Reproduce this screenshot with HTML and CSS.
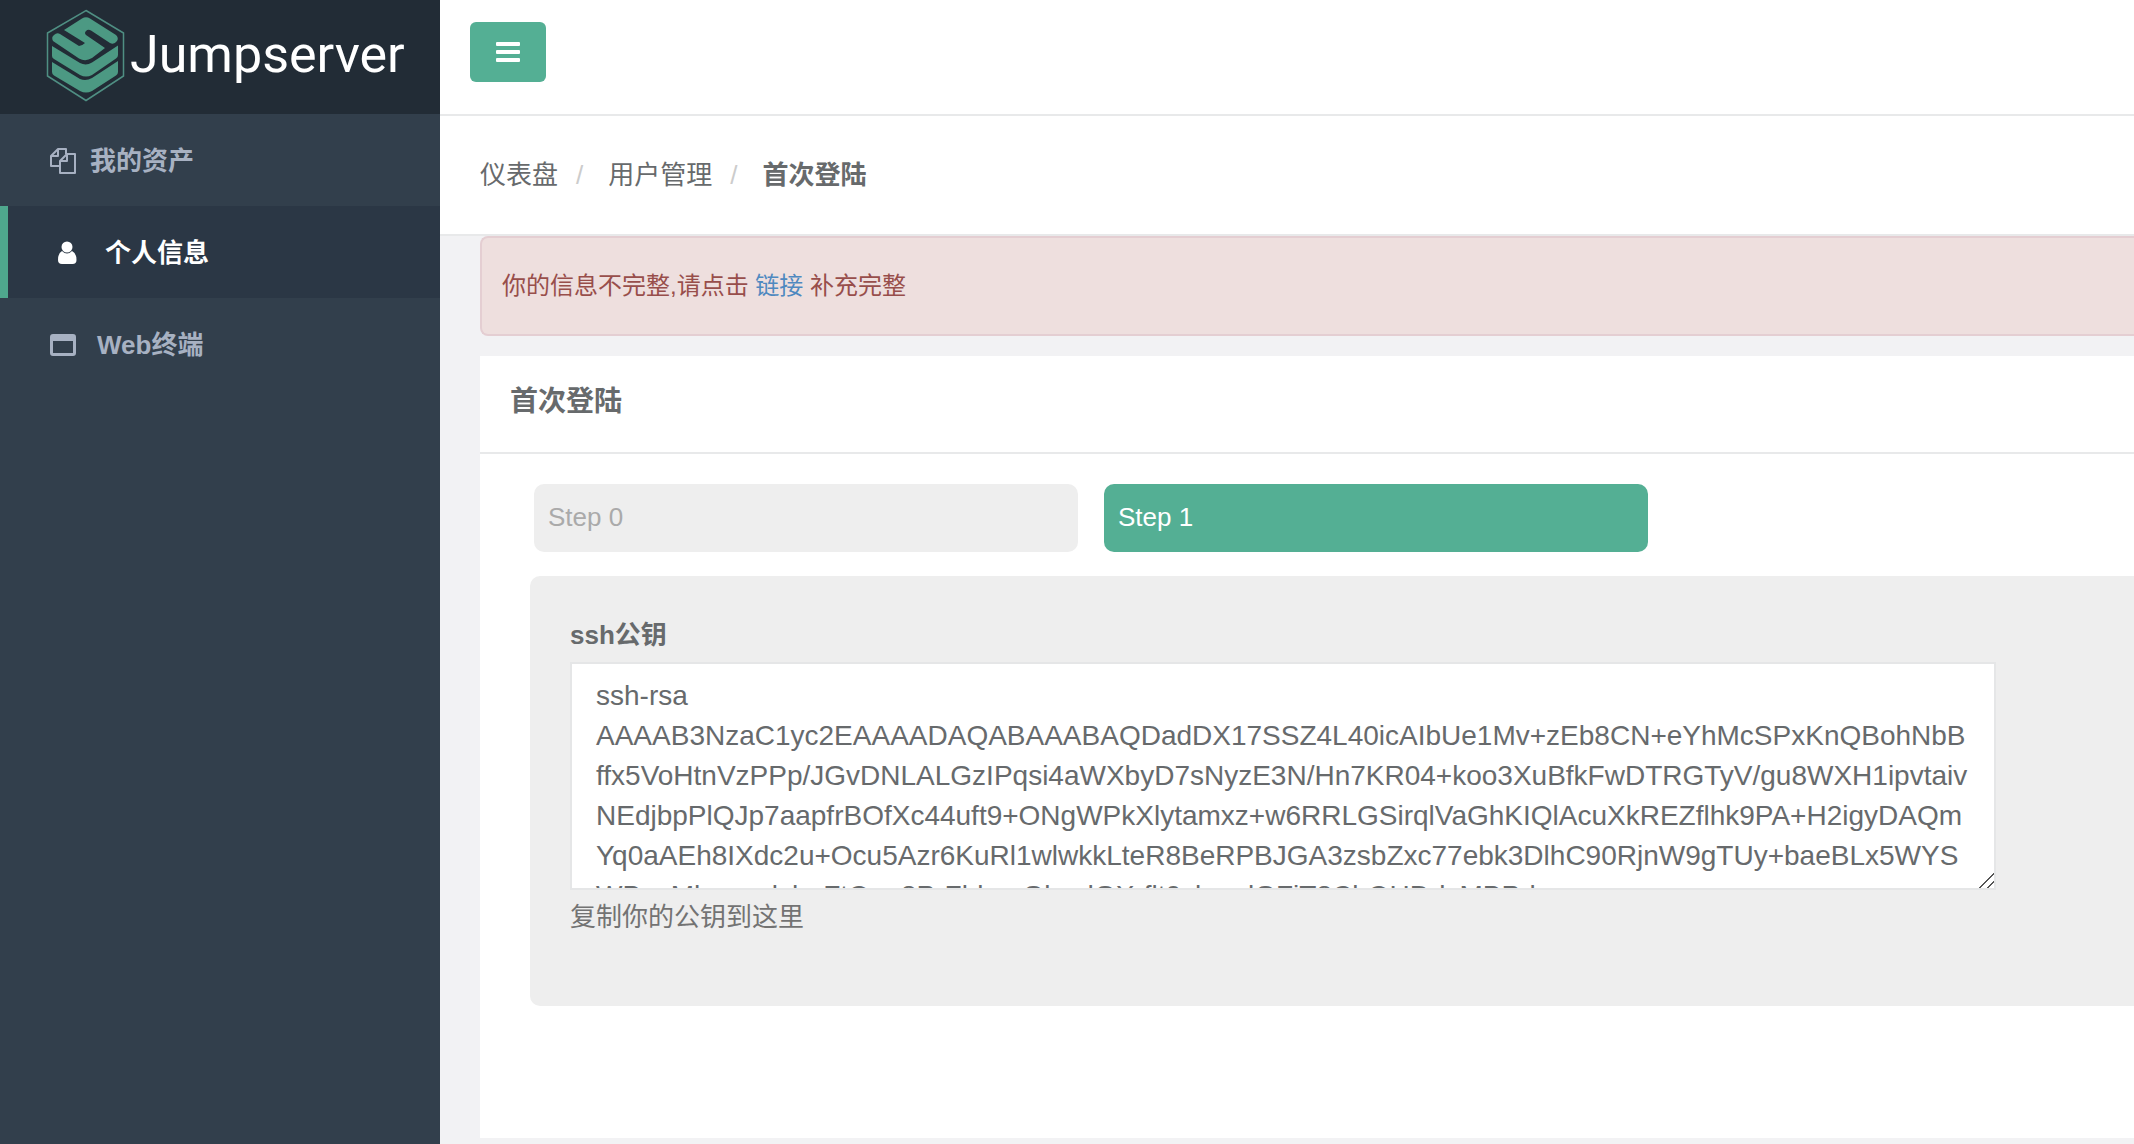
FILE: index.html
```
<!DOCTYPE html>
<html lang="zh-CN">
<head>
  <meta charset="UTF-8">
  <meta name="viewport" content="width=device-width, initial-scale=1.0">
  <title>Jumpserver</title>
  <link rel="stylesheet" href="styles.css">
</head>
<body>
  <div class="wrapper">
    <nav class="sidebar">
      <a class="logo" href="#">
        <svg class="logo-mark" viewBox="0 0 80 94" width="80" height="94">
          <path d="M40 2.500 L77.500 25 V68 L40 92.500 L1.500 68 V25 Z" fill="none" stroke="#4f8f83" stroke-width="1.500"/>
          <g fill="#4c9983">
            <path d="M18 22 L36 10.500 Q40 8 44 10.500 L70 27 Q73 30 71 33 Q68 37 64 35 L45 22.500 Q42 21 40 23 Q38 25 40 27 L59 40 L46 50 Q39.500 54 33 50.500 L7 33 Q5 29 8 27 Q11 24 14 26 L33 38 Q36 38 39 35 Z"/>
            <path d="M6 38 L34 55 Q40 58 46 54.500 L72 37.500 V47 Q72 49 70 50.500 L46 67 Q40 70 34 67 L8 51 Q6 50 6 48 Z"/>
            <path d="M6 54 L34 71 Q40 73.500 46 70 L72 53 V64 Q72 66 70 67.500 L46 83 Q40 86 34 83 L8 67.500 Q6 66 6 64 Z"/>
          </g>
        </svg>
        <span class="logo-text">Jumpserver</span>
      </a>
      <ul class="menu">
        <li>
          <a href="#">
            <svg class="menu-icon icon-close" viewBox="0 0 26 26" width="26" height="26" fill="none" stroke="currentColor" stroke-width="2" stroke-linejoin="round">
              <path d="M9 18 H1 V8 L8 1 H16 V6"/>
              <path d="M8 1 V8 H1"/>
              <path d="M10 13 L17 6 H25 V25 H10 Z"/>
              <path d="M17 6 V13 H10"/>
            </svg>
            <span>我的资产</span>
          </a>
        </li>
        <li class="active">
          <a href="#">
            <svg class="menu-icon" viewBox="0 0 26 26" width="26" height="26" fill="currentColor">
              <circle cx="9" cy="7" r="5.500"/>
              <path d="M4 11 Q9 16 14 11 Q18.500 13 18.500 20 Q18.500 24 14.500 24 H4 Q0 24 0 20 Q0 13 4 11 Z"/>
            </svg>
            <span>个人信息</span>
          </a>
        </li>
        <li>
          <a href="#">
            <svg class="menu-icon" viewBox="0 0 26 26" width="26" height="26" fill="currentColor">
              <path fill-rule="evenodd" d="M3 2 H23 Q26 2 26 5 V21 Q26 24 23 24 H3 Q0 24 0 21 V5 Q0 2 3 2 Z M3 9 V21 H23 V9 Z"/>
            </svg>
            <span>Web终端</span>
          </a>
        </li>
      </ul>
    </nav>

    <div class="page">
      <header class="topbar">
        <button class="toggle" type="button" aria-label="菜单">
          <svg viewBox="0 0 24 20" width="24" height="20" fill="#fff">
            <rect width="24" height="4" rx="1"/>
            <rect y="8" width="24" height="4" rx="1"/>
            <rect y="16" width="24" height="4" rx="1"/>
          </svg>
        </button>
      </header>

      <ol class="breadcrumb">
        <li><a href="#">仪表盘</a></li>
        <li><a href="#">用户管理</a></li>
        <li><strong>首次登陆</strong></li>
      </ol>

      <main class="content">
        <div class="alert">你的信息不完整,请点击 <a href="#">链接</a> 补充完整</div>

        <section class="box">
          <h5 class="box-title">首次登陆</h5>
          <div class="box-content">
            <div class="steps">
              <a class="step" href="#">Step 0</a>
              <a class="step current" href="#">Step 1</a>
            </div>
            <form class="wizard">
              <label for="public-key">ssh公钥</label>
              <textarea id="public-key" spellcheck="false">ssh-rsa
AAAAB3NzaC1yc2EAAAADAQABAAABAQDadDX17SSZ4L40icAIbUe1Mv+zEb8CN+eYhMcSPxKnQBohNbBffx5VoHtnVzPPp/JGvDNLALGzIPqsi4aWXbyD7sNyzE3N/Hn7KR04+koo3XuBfkFwDTRGTyV/gu8WXH1ipvtaivNEdjbpPlQJp7aapfrBOfXc44uft9+ONgWPkXlytamxz+w6RRLGSirqlVaGhKIQlAcuXkREZflhk9PA+H2igyDAQmYq0aAEh8IXdc2u+Ocu5Azr6KuRl1wlwkkLteR8BeRPBJGA3zsbZxc77ebk3DlhC90RjnW9gTUy+baeBLx5WYSWBzqMhoeeolshoFtOao8PrFlrlumGlscdGXrflt0slneolGFiT8ClrOHDrlsMBPrl</textarea>
              <p class="help">复制你的公钥到这里</p>
            </form>
          </div>
        </section>
      </main>
    </div>
  </div>
</body>
</html>
```
FILE: styles.css
```
* {
  box-sizing: border-box;
}
body {
  margin: 0;
  background: #f2f2f4;
  color: #676a6c;
  font-family: "Liberation Sans", "Noto Sans CJK SC", sans-serif;
  font-size: 26px;
  line-height: 40px;
}
a {
  color: inherit;
  text-decoration: none;
}
.wrapper {
  display: flex;
  min-height: 100vh;
}

/* sidebar */
.sidebar {
  flex: 0 0 440px;
  background: #323f4c;
}
.logo {
  display: flex;
  align-items: center;
  gap: 4px;
  height: 114px;
  padding: 0 0 4px 46px;
  background: #222c36;
}
.logo-mark {
  flex: none;
}
.logo-text {
  color: #fff;
  font-family: Roboto, sans-serif;
  font-size: 52px;
  font-weight: 400;
  line-height: 60px;
}
.menu {
  margin: 0;
  padding: 0;
  list-style: none;
}
.menu a {
  display: flex;
  align-items: center;
  height: 92px;
  padding: 2px 0 0 50px;
  color: #a7b1c2;
  font-weight: bold;
}
.menu .active {
  border-left: 8px solid #4fa78d;
  background: #2b3745;
}
.menu .active a {
  color: #fff;
}
.menu-icon {
  margin-right: 21px;
}
.icon-close {
  margin-right: 14px;
}

/* header */
.page {
  flex: 1;
  min-width: 0;
}
.topbar {
  height: 116px;
  padding: 22px 30px;
  border-bottom: 2px solid #e8e9ea;
  background: #fff;
}
.toggle {
  display: flex;
  align-items: center;
  justify-content: center;
  width: 76px;
  height: 60px;
  padding: 0;
  border: none;
  border-radius: 6px;
  background: #54af94;
  cursor: pointer;
}
.breadcrumb {
  display: flex;
  margin: 0;
  padding: 39px 40px;
  border-bottom: 2px solid #e8e9ea;
  background: #fff;
  list-style: none;
}
.breadcrumb li + li::before {
  content: "/";
  padding: 0 25px 0 18px;
  color: #ccc;
}

/* content */
.content {
  padding-left: 40px;
}
.alert {
  margin-bottom: 20px;
  padding: 28px 20px;
  border: 2px solid #e4ced2;
  border-right: none;
  border-radius: 8px 0 0 8px;
  background: #eedfde;
  color: #984e4b;
  font-size: 24px;
}
.alert a {
  color: #4f89c0;
}
.box {
  background: #fff;
}
.box-title {
  margin: 0;
  padding: 26px 30px 30px;
  border-bottom: 2px solid #e8e9ea;
  font-size: 28px;
}
.box-content {
  padding: 30px 0 132px 50px;
}
.steps {
  display: flex;
  gap: 26px;
  margin-bottom: 24px;
  padding-left: 4px;
}
.step {
  flex: 0 0 34%;
  padding: 13px 14px 15px;
  border-radius: 10px;
  background: #eee;
  color: #aaa;
}
.step.current {
  background: #54af94;
  color: #fff;
}
.wizard {
  padding: 39px 138px 69px 40px;
  border-radius: 10px 0 0 10px;
  background: #eee;
}
.wizard label {
  display: block;
  margin-bottom: 7px;
  font-weight: bold;
}
.wizard textarea {
  display: block;
  width: 100%;
  height: 228px;
  padding: 12px 24px;
  border: 2px solid #e5e6e7;
  background: #fff;
  color: #676a6c;
  font: inherit;
  font-size: 28px;
  overflow: hidden;
  resize: vertical;
}
.wizard textarea::-webkit-resizer {
  background: linear-gradient(135deg, transparent 48%, #555 48%, #555 54%, transparent 54%, transparent 76%, #555 76%, #555 82%, transparent 82%);
}
.help {
  margin: 7px 0 0;
  color: #737373;
}
```
